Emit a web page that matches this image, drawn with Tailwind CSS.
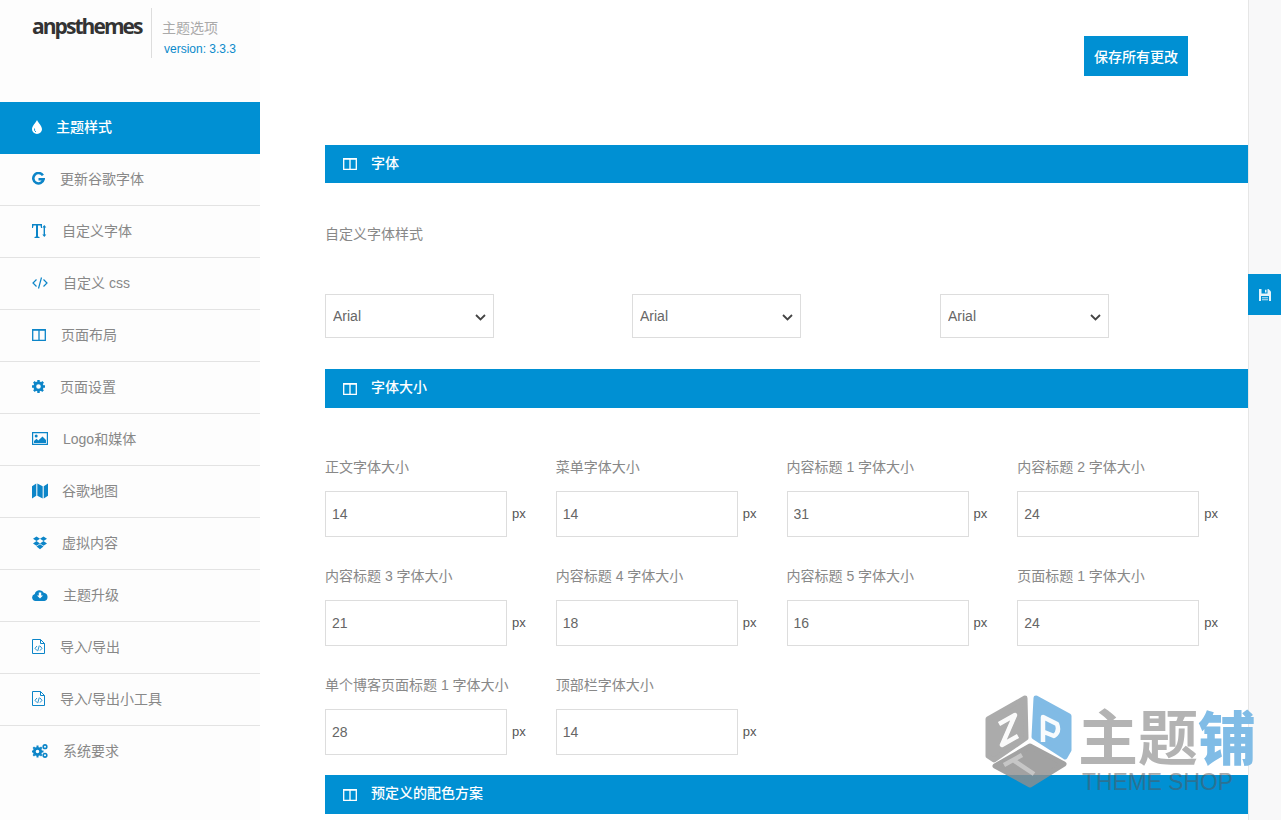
<!DOCTYPE html>
<html>
  <head>
    <title>主题选项</title>
    <meta charset="utf-8" />
    <script src="https://cdn.jsdelivr.net/npm/@tailwindcss/browser@4"></script>
  </head>
  <body class="bg-white overflow-hidden font-['Liberation_Sans','Noto_Sans_CJK_SC',sans-serif] text-sm">
    <div class="relative flex h-[820px] w-[1281px] overflow-hidden">
      <!-- sidebar -->
      <aside class="w-[260px] shrink-0 bg-[#fdfdfd] text-[#888]">
        <div class="flex h-[102px] items-start pl-8 pt-2">
          <span class="mt-[4px] w-[119px] font-['Open_Sans',sans-serif] text-[21px] leading-[28px] font-bold tracking-[-1.95px] text-[#333]">anpsthemes</span>
          <div class="flex h-[50px] border-l border-[#ddd] pl-[10px] flex-col">
            <span class="mt-[10px] text-[14px] leading-5 text-[#aaa]">主题选项</span>
            <span class="mt-[3px] ml-[2px] text-xs leading-4 text-[#0a8acb]">version: 3.3.3</span>
          </div>
        </div>
        <nav class="flex flex-col">
          <a class="flex h-[52px] items-center gap-[14px] bg-[#0090d3] pb-[2px] pl-8 text-white">
            <svg class="w-[10px] h-[14px]" viewBox="0 0 10 14"><path d="M5 0C4 2.500 0 6 0 9.200a5 4.800 0 0 0 10 0C10 6 6 2.500 5 0z" fill="#fff"/><path d="M2.500 8.500Q2 11 4 12" fill="none" stroke="#0090d3" stroke-width=".9"/></svg>
            <span class="font-medium">主题样式</span>
          </a>
          <a class="flex h-[52px] items-center gap-[15px] border-b border-[#e3e3e3] pb-[2px] pl-8">
            <svg class="w-[13px] h-[14px]" viewBox="0 0 14 14" fill="none" stroke="#0c85c8" stroke-width="2.800"><path d="M11.700 3.100A5.600 5.600 0 1 0 12.500 7.300H7"/></svg>
            <span>更新谷歌字体</span>
          </a>
          <a class="flex h-[52px] items-center gap-[15px] border-b border-[#e3e3e3] pb-[2px] pl-8">
            <svg class="w-[15px] h-[14px]" viewBox="0 0 15 14" fill="#0c85c8"><path d="M0 0h10v4H9L8.500 1.500H6V12.500l1.500.5v1H2.500v-1l1.500-.5V1.500H1.500L1 4H0zM12.300 1l2 2.500h-1.300v7h1.300l-2 2.500-2-2.500h1.300v-7h-1.300z"/></svg>
            <span>自定义字体</span>
          </a>
          <a class="flex h-[52px] items-center gap-[15px] border-b border-[#e3e3e3] pb-[2px] pl-8">
            <svg class="w-[16px] h-[12px]" viewBox="0 0 16 12" fill="none" stroke="#0c85c8" stroke-width="1.200"><path d="M4.500 2.500 1 6l3.500 3.500M11.500 2.500 15 6l-3.500 3.500M9.500.5l-3 11"/></svg>
            <span>自定义 css</span>
          </a>
          <a class="flex h-[52px] items-center gap-[15px] border-b border-[#e3e3e3] pb-[2px] pl-8">
            <svg class="w-[14px] h-[12px]" viewBox="0 0 14 12" fill="none" stroke="#0c85c8" stroke-width="1.300"><path d="M.7.700h12.600v10.600H.7zM7 .7v10.600"/><path d="M.7.700h12.600" stroke-width="2"/></svg>
            <span>页面布局</span>
          </a>
          <a class="flex h-[52px] items-center gap-[15px] border-b border-[#e3e3e3] pb-[2px] pl-8">
            <svg class="w-[13px] h-[13px]" viewBox="0 0 14 14"><circle cx="7" cy="7" r="4" fill="none" stroke="#0c85c8" stroke-width="3"/><path d="M7 0v14M0 7h14M2 2l10 10M12 2 2 12" stroke="#0c85c8" stroke-width="2.600" stroke-dasharray="2.600 8.800 2.600"/></svg>
            <span>页面设置</span>
          </a>
          <a class="flex h-[52px] items-center gap-[15px] border-b border-[#e3e3e3] pb-[2px] pl-8">
            <svg class="w-[16px] h-[13px]" viewBox="0 0 16 13"><path d="M.6.600h14.800v11.800H.6z" fill="none" stroke="#0c85c8" stroke-width="1.200"/><circle cx="4.200" cy="4" r="1.500" fill="#0c85c8"/><path d="M2 11V9l2.500-2.200L6.300 8.500 10.500 4.500 14 8v3z" fill="#0c85c8"/></svg>
            <span>Logo和媒体</span>
          </a>
          <a class="flex h-[52px] items-center gap-[14px] border-b border-[#e3e3e3] pb-[2px] pl-8">
            <svg class="w-[16px] h-[16px]" viewBox="0 0 15 15" fill="#0c85c8"><path d="M0 3 4 .5v11.500L0 14.500zM5 .5l5 2.500v11.500L5 12zM11 3l4-2.500v11.500L11 14.500z"/></svg>
            <span>谷歌地图</span>
          </a>
          <a class="flex h-[52px] items-center gap-[15px] border-b border-[#e3e3e3] pb-[2px] pl-[33px]">
            <svg class="w-[14px] h-[14px]" viewBox="0 0 14 13" fill="#0c85c8"><path d="M3.500 0 7 2.300 3.500 4.600 0 2.300zM10.500 0 14 2.300l-3.500 2.300L7 2.300zM3.500 4.600 7 6.900 3.500 9.200 0 6.900zM10.500 4.600 14 6.900l-3.500 2.300L7 6.900zM3.500 10l3.500-2.300 3.500 2.300L7 12.700z"/></svg>
            <span>虚拟内容</span>
          </a>
          <a class="flex h-[52px] items-center gap-[15px] border-b border-[#e3e3e3] pb-[2px] pl-8">
            <svg class="w-[16px] h-[12px]" viewBox="0 0 16 12"><path d="M3.500 12A3.500 3.500 0 0 1 2.800 5.100 4.800 4.800 0 0 1 11.800 3.800 4.200 4.200 0 0 1 12.500 12z" fill="#0c85c8"/><path d="M6.800 3.500h2.400v3h1.800L8 9.500l-3-3h1.800z" fill="#fff"/></svg>
            <span>主题升级</span>
          </a>
          <a class="flex h-[52px] items-center gap-[15px] border-b border-[#e3e3e3] pb-[2px] pl-8">
            <svg class="w-[13px] h-[15px]" viewBox="0 0 13 15" fill="none" stroke="#0c85c8"><path d="M.5.500h8l4 4v10H.5zM8.500.5v4h4" stroke-width="1"/><path d="M5 7 3 9.300 5 11.600M8 7l2 2.300-2 2.300M7.300 6.500l-1.600 5.600" stroke-width=".9"/></svg>
            <span>导入/导出</span>
          </a>
          <a class="flex h-[52px] items-center gap-[15px] border-b border-[#e3e3e3] pb-[2px] pl-8">
            <svg class="w-[13px] h-[15px]" viewBox="0 0 13 15" fill="none" stroke="#0c85c8"><path d="M.5.500h8l4 4v10H.5zM8.500.5v4h4" stroke-width="1"/><path d="M5 7 3 9.300 5 11.600M8 7l2 2.300-2 2.300M7.300 6.500l-1.600 5.600" stroke-width=".9"/></svg>
            <span>导入/导出小工具</span>
          </a>
          <a class="flex h-[52px] items-center gap-[15px] pb-[2px] pl-8">
            <svg class="w-[16px] h-[14px]" viewBox="0 0 16 14" fill="none" stroke="#0c85c8"><circle cx="5.500" cy="7.500" r="3.200" stroke-width="2.800"/><path d="M5.500 1.500v12M-.5 7.500h12M1.300 3.300l8.400 8.400M9.700 3.300l-8.400 8.400" stroke-width="2" stroke-dasharray="1.800 8.400 1.800"/><circle cx="13" cy="2.700" r="1.800" stroke-width="1.600"/><circle cx="13" cy="11.300" r="1.800" stroke-width="1.600"/></svg>
            <span>系统要求</span>
          </a>
        </nav>
      </aside>

      <!-- main column -->
      <main class="w-[988px] shrink-0 pl-[65px] text-[#888]">
        <div class="flex h-[145px] items-start justify-end pr-[60px] pt-9">
          <button class="h-10 w-[104px] bg-[#0090d3] pt-[2px] text-[14px] font-medium text-white">保存所有更改</button>
        </div>

        <div class="flex h-[38px] items-center gap-[14px] bg-[#0090d3] pl-[18px] font-medium text-white">
          <svg class="w-[14px] h-[12px]" viewBox="0 0 14 12" fill="none" stroke="#fff" stroke-width="1.300"><path d="M.7.700h12.600v10.600H.7zM7 .7v10.600"/><path d="M.7.700h12.600" stroke-width="2"/></svg>
          <span class="-mt-[2px]">字体</span>
        </div>
        <p class="mt-[41px] leading-5">自定义字体样式</p>
        <div class="mt-[50px] grid grid-cols-[307px_308px_1fr]">
          <div class="relative w-[169px]">
            <select class="h-11 w-full appearance-none border border-[#ddd] bg-white pl-[7px] text-[#666]"><option>Arial</option></select>
            <svg class="absolute right-2 top-[20px] w-[11px] h-[7px]" viewBox="0 0 11 7" fill="none" stroke="#444" stroke-width="1.800"><path d="m1 1 4.500 4.500L10 1"/></svg>
          </div>
          <div class="relative w-[169px]">
            <select class="h-11 w-full appearance-none border border-[#ddd] bg-white pl-[7px] text-[#666]"><option>Arial</option></select>
            <svg class="absolute right-2 top-[20px] w-[11px] h-[7px]" viewBox="0 0 11 7" fill="none" stroke="#444" stroke-width="1.800"><path d="m1 1 4.500 4.500L10 1"/></svg>
          </div>
          <div class="relative w-[169px]">
            <select class="h-11 w-full appearance-none border border-[#ddd] bg-white pl-[7px] text-[#666]"><option>Arial</option></select>
            <svg class="absolute right-2 top-[20px] w-[11px] h-[7px]" viewBox="0 0 11 7" fill="none" stroke="#444" stroke-width="1.800"><path d="m1 1 4.500 4.500L10 1"/></svg>
          </div>
        </div>

        <div class="mt-[31px] flex h-[39px] items-center gap-[14px] bg-[#0090d3] pl-[18px] font-medium text-white">
          <svg class="w-[14px] h-[12px]" viewBox="0 0 14 12" fill="none" stroke="#fff" stroke-width="1.300"><path d="M.7.700h12.600v10.600H.7zM7 .7v10.600"/><path d="M.7.700h12.600" stroke-width="2"/></svg>
          <span class="-mt-[3px]">字体大小</span>
        </div>
        <div class="mt-[49px] grid h-[318px] grid-cols-4 grid-rows-3 gap-y-[9px]">
          <div>
            <p class="leading-5">正文字体大小</p>
            <div class="mt-[14px] flex items-center gap-[5px]"><input class="h-[46px] w-[182px] border border-[#ddd] pl-[6px] text-[#666]" value="14" /><span class="text-[13px] text-[#555]">px</span></div>
          </div>
          <div>
            <p class="leading-5">菜单字体大小</p>
            <div class="mt-[14px] flex items-center gap-[5px]"><input class="h-[46px] w-[182px] border border-[#ddd] pl-[6px] text-[#666]" value="14" /><span class="text-[13px] text-[#555]">px</span></div>
          </div>
          <div>
            <p class="leading-5">内容标题 1 字体大小</p>
            <div class="mt-[14px] flex items-center gap-[5px]"><input class="h-[46px] w-[182px] border border-[#ddd] pl-[6px] text-[#666]" value="31" /><span class="text-[13px] text-[#555]">px</span></div>
          </div>
          <div>
            <p class="leading-5">内容标题 2 字体大小</p>
            <div class="mt-[14px] flex items-center gap-[5px]"><input class="h-[46px] w-[182px] border border-[#ddd] pl-[6px] text-[#666]" value="24" /><span class="text-[13px] text-[#555]">px</span></div>
          </div>
          <div>
            <p class="leading-5">内容标题 3 字体大小</p>
            <div class="mt-[14px] flex items-center gap-[5px]"><input class="h-[46px] w-[182px] border border-[#ddd] pl-[6px] text-[#666]" value="21" /><span class="text-[13px] text-[#555]">px</span></div>
          </div>
          <div>
            <p class="leading-5">内容标题 4 字体大小</p>
            <div class="mt-[14px] flex items-center gap-[5px]"><input class="h-[46px] w-[182px] border border-[#ddd] pl-[6px] text-[#666]" value="18" /><span class="text-[13px] text-[#555]">px</span></div>
          </div>
          <div>
            <p class="leading-5">内容标题 5 字体大小</p>
            <div class="mt-[14px] flex items-center gap-[5px]"><input class="h-[46px] w-[182px] border border-[#ddd] pl-[6px] text-[#666]" value="16" /><span class="text-[13px] text-[#555]">px</span></div>
          </div>
          <div>
            <p class="leading-5">页面标题 1 字体大小</p>
            <div class="mt-[14px] flex items-center gap-[5px]"><input class="h-[46px] w-[182px] border border-[#ddd] pl-[6px] text-[#666]" value="24" /><span class="text-[13px] text-[#555]">px</span></div>
          </div>
          <div>
            <p class="leading-5">单个博客页面标题 1 字体大小</p>
            <div class="mt-[14px] flex items-center gap-[5px]"><input class="h-[46px] w-[182px] border border-[#ddd] pl-[6px] text-[#666]" value="28" /><span class="text-[13px] text-[#555]">px</span></div>
          </div>
          <div>
            <p class="leading-5">顶部栏字体大小</p>
            <div class="mt-[14px] flex items-center gap-[5px]"><input class="h-[46px] w-[182px] border border-[#ddd] pl-[6px] text-[#666]" value="14" /><span class="text-[13px] text-[#555]">px</span></div>
          </div>
        </div>

        <div class="flex h-[39px] items-center gap-[14px] bg-[#0090d3] pl-[18px] font-medium text-white">
          <svg class="w-[14px] h-[12px]" viewBox="0 0 14 12" fill="none" stroke="#fff" stroke-width="1.300"><path d="M.7.700h12.600v10.600H.7zM7 .7v10.600"/><path d="M.7.700h12.600" stroke-width="2"/></svg>
          <span class="-mt-[3px]">预定义的配色方案</span>
        </div>
      </main>

      <!-- right strip -->
      <div class="flex-1 border-l border-[#e6e6e6] bg-[#f8f8f9]"></div>

      <!-- floating save tab -->
      <div class="absolute right-0 top-[274px] flex h-[41px] w-[33px] items-center justify-center bg-[#0090d3]">
        <svg class="w-[12px] h-[12px]" viewBox="0 0 12 12"><path d="M0 0h9.500L12 2.500V12H0z" fill="#e3f3fb"/><path d="M2.500 0h6v4.500h-6z" fill="#0090d3"/><path d="M6 .8h1.500v2.800H6z" fill="#e3f3fb"/><path d="M2 7h8v5H2z" fill="#0090d3"/><path d="M3 8.300h6v1H3zM3 10.200h6v1H3z" fill="#bfe2f4"/></svg>
      </div>

      <!-- watermark -->
      <svg class="absolute left-[960px] top-[680px] w-[321px] h-[140px]" viewBox="0 0 321 140">
        <g opacity=".82" stroke-linejoin="round" stroke-width="5">
          <path d="M65 18 28 39V76L34 80 66 58Z" fill="#999" stroke="#999"/>
          <path d="M76 18 109 36V70L105 77 74 57Z" fill="#66ade0" stroke="#66ade0"/>
          <path d="M35 86 70 66 104 84 70 105Z" fill="#8e8e8e" stroke="#8e8e8e"/>
        </g>
        <g fill="none" stroke="#fff" stroke-width="4.500" stroke-linejoin="round" opacity=".95">
          <path d="M39 44 55 35 42 65 58 56"/>
          <path d="M83 62V37L97 44Q100 52 94 56L84 52"/>
          <path d="M44 85 62 75M53 80 74 94" stroke="#c8c8c8"/>
        </g>
        <text x="118" y="80" font-size="60" font-weight="700" fill="#b3b3b3" font-family="'Noto Sans CJK SC',sans-serif">主题</text>
        <text x="238" y="80" font-size="58" font-weight="900" fill="#80bce6" font-family="'Noto Sans CJK SC',sans-serif">铺</text>
        <text x="122" y="110" font-size="24" textLength="151" lengthAdjust="spacingAndGlyphs" fill="#555" opacity=".5" font-family="'Liberation Sans',sans-serif">THEME SHOP</text>
      </svg>
    </div>
  </body>
</html>
